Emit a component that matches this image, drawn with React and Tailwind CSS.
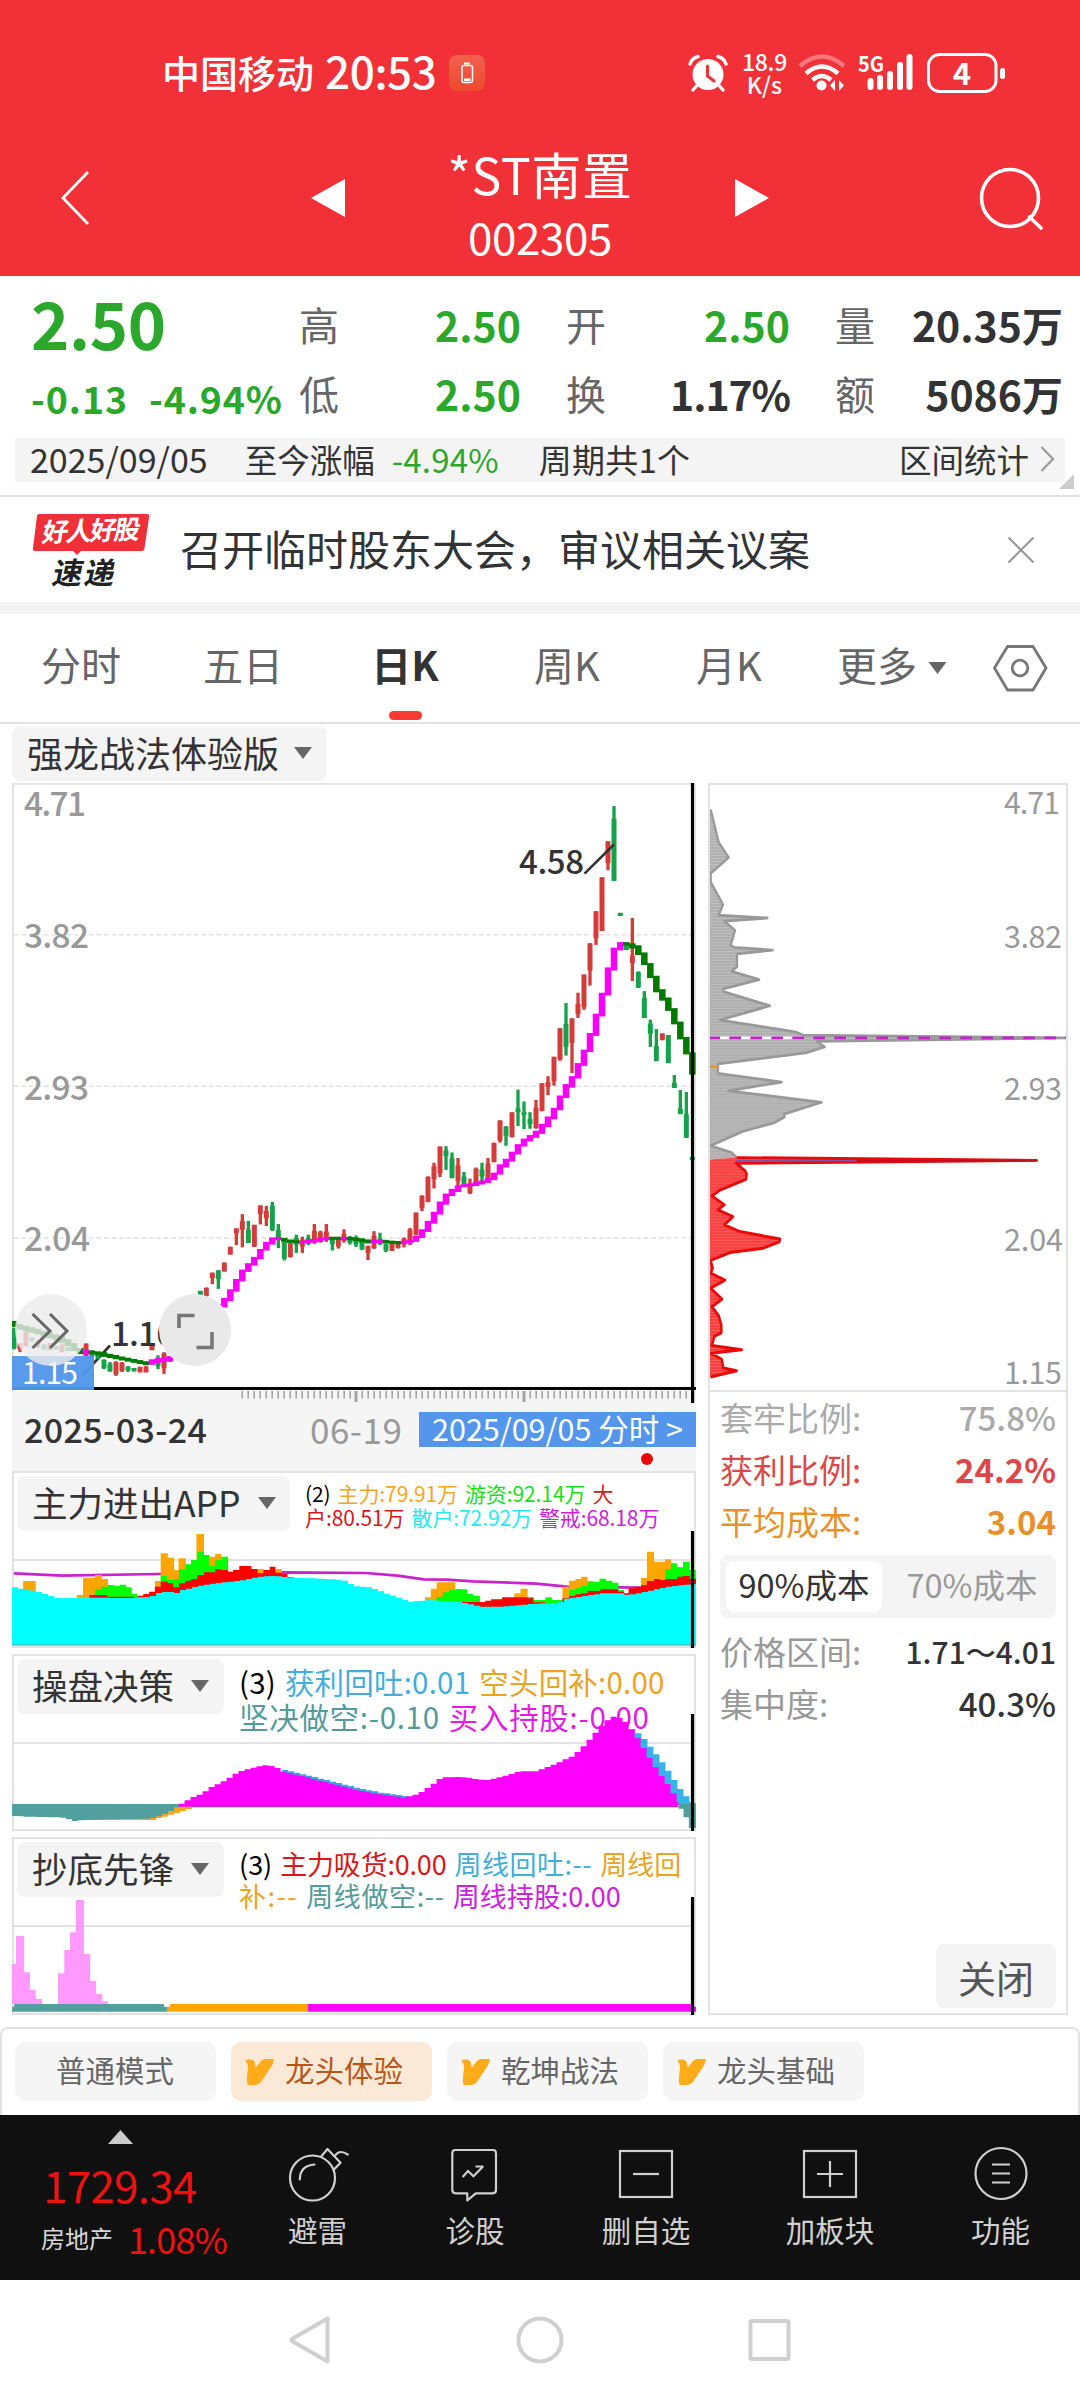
import React from "react";

const FONT = "'Noto Sans CJK SC', 'Noto Sans', sans-serif";
const RED = "#d43c3c";
const GREEN = "#16a24a";

/* Candles: [x, wickTop, wickBottom, bodyTop, bodyBottom, isUp] */
const EARLY_CANDLES = [
  [42, 1385, 1440, 1388, 1438, 0], [60, 1425, 1447, 1425, 1440, 1], [78, 1395, 1432, 1395, 1432, 1],
  [96, 1410, 1420, 1410, 1420, 0], [114, 1416, 1436, 1420, 1428, 1], [132, 1428, 1440, 1428, 1440, 0],
  [150, 1424, 1442, 1424, 1442, 1], [168, 1432, 1440, 1432, 1440, 0], [186, 1428, 1447, 1428, 1447, 1],
  [204, 1434, 1444, 1434, 1444, 0], [258, 1425, 1457, 1425, 1457, 1], [276, 1442, 1462, 1446, 1458, 0],
  [294, 1450, 1465, 1452, 1463, 0], [312, 1465, 1490, 1467, 1488, 0], [330, 1472, 1497, 1476, 1495, 0],
  [348, 1470, 1507, 1472, 1503, 1], [366, 1472, 1497, 1474, 1495, 1], [384, 1482, 1497, 1484, 1493, 0],
  [402, 1487, 1496, 1487, 1495, 0], [420, 1484, 1498, 1484, 1498, 1], [438, 1482, 1498, 1484, 1498, 1],
  [456, 1428, 1442, 1428, 1442, 1], [474, 1455, 1490, 1462, 1482, 0], [492, 1447, 1502, 1450, 1488, 1],
  [510, 1462, 1472, 1462, 1470, 0], [601, 1292, 1312, 1292, 1312, 0], [619, 1283, 1310, 1285, 1305, 1],
  [637, 1246, 1275, 1246, 1260, 1], [655, 1240, 1287, 1240, 1262, 0], [673, 1220, 1243, 1221, 1243, 1],
  [691, 1180, 1200, 1181, 1200, 1], [709, 1134, 1176, 1134, 1147, 1], [727, 1098, 1182, 1115, 1137, 1],
  [745, 1115, 1171, 1137, 1171, 0], [763, 1125, 1181, 1125, 1180, 1], [781, 1076, 1124, 1076, 1098, 1],
  [799, 1077, 1128, 1090, 1108, 1], [817, 1067, 1141, 1077, 1138, 0], [835, 1123, 1184, 1138, 1162, 0],
  [853, 1160, 1215, 1168, 1210, 0], [871, 1170, 1208, 1172, 1206, 1], [889, 1150, 1196, 1158, 1175, 0],
  [907, 1155, 1196, 1162, 1180, 1], [925, 1150, 1176, 1158, 1170, 0], [943, 1123, 1173, 1140, 1168, 1],
  [961, 1140, 1170, 1144, 1168, 1], [979, 1123, 1168, 1142, 1162, 1], [997, 1158, 1190, 1160, 1174, 0],
  [1015, 1158, 1185, 1160, 1180, 1],
];

const LATE_CANDLES = [
  [12, 1136, 1170, 1148, 1165, 1], [30, 1153, 1175, 1155, 1171, 0], [48, 1152, 1181, 1160, 1175, 0],
  [66, 1165, 1189, 1168, 1187, 0], [84, 1178, 1214, 1178, 1196, 1], [102, 1141, 1186, 1152, 1184, 1],
  [120, 1145, 1176, 1160, 1174, 0], [138, 1172, 1194, 1174, 1190, 0], [156, 1170, 1191, 1172, 1191, 1],
  [174, 1166, 1185, 1168, 1183, 1], [192, 1157, 1182, 1160, 1174, 1], [210, 1133, 1176, 1137, 1165, 1],
  [228, 1094, 1152, 1094, 1150, 1], [246, 1050, 1090, 1052, 1083, 1], [264, 1002, 1068, 1004, 1067, 1],
  [282, 968, 1033, 977, 1010, 1], [300, 927, 1004, 927, 995, 1], [318, 926, 986, 937, 951, 0],
  [336, 942, 1007, 957, 1007, 0], [354, 956, 1030, 975, 1015, 1], [372, 991, 1025, 1003, 1023, 0],
  [390, 1008, 1047, 1024, 1045, 1], [408, 980, 1025, 983, 1020, 1], [426, 968, 1015, 985, 1003, 0],
  [444, 956, 1012, 970, 1008, 1], [462, 917, 967, 918, 966, 1], [480, 861, 917, 861, 912, 1],
  [498, 876, 925, 876, 900, 0], [516, 840, 904, 841, 903, 1], [534, 783, 875, 831, 840, 0],
  [552, 813, 883, 840, 847, 0], [570, 840, 882, 857, 870, 0], [588, 809, 882, 829, 880, 1],
  [606, 767, 838, 767, 837, 1], [624, 749, 797, 764, 776, 1], [642, 700, 773, 700, 762, 1],
  [660, 628, 710, 628, 707, 1], [678, 564, 697, 617, 675, 0], [696, 603, 741, 603, 665, 1],
  [714, 538, 602, 566, 592, 1], [732, 492, 581, 492, 575, 1], [750, 413, 520, 413, 482, 1],
  [768, 332, 417, 332, 400, 1], [786, 246, 382, 246, 382, 1], [804, 155, 228, 155, 210, 1],
  [822, 66, 255, 98, 255, 0], [841, 336, 343, 336, 344, 0], [859, 412, 430, 412, 430, 0],
  [877, 349, 508, 444, 463, 1], [895, 484, 526, 486, 525, 0], [913, 534, 602, 551, 602, 0],
  [931, 606, 675, 616, 642, 0], [949, 630, 711, 673, 711, 0], [967, 641, 658, 641, 658, 1],
  [985, 645, 716, 645, 716, 0], [1003, 746, 779, 766, 779, 0], [1021, 784, 845, 831, 845, 0],
  [1039, 789, 905, 845, 905, 0], [1057, 953, 961, 953, 961, 0],
];

/* Trend ribbon: [x, top, bottom, isRising] */
const EARLY_TREND = [
  [42, 1368, 1383, 0], [60, 1376, 1390, 0], [78, 1380, 1394, 0], [96, 1384, 1398, 0], [114, 1388, 1402, 0],
  [132, 1393, 1408, 0], [150, 1397, 1412, 0], [168, 1402, 1417, 0], [186, 1407, 1424, 0], [204, 1414, 1432, 0],
  [222, 1424, 1444, 0], [240, 1436, 1452, 0], [258, 1441, 1453, 1], [276, 1443, 1452, 0], [294, 1445, 1455, 0],
  [312, 1447, 1459, 0], [330, 1451, 1462, 0], [348, 1454, 1465, 0], [366, 1458, 1468, 0], [384, 1461, 1471, 0],
  [402, 1464, 1474, 0], [420, 1467, 1477, 0], [438, 1470, 1480, 0], [456, 1465, 1479, 1], [474, 1462, 1474, 1],
  [492, 1461, 1471, 1], [510, 1457, 1470, 1], [655, 1325, 1345, 1], [673, 1310, 1334, 1], [691, 1288, 1318, 1],
  [709, 1262, 1294, 1], [727, 1238, 1268, 1], [745, 1222, 1244, 1], [763, 1206, 1228, 1], [781, 1186, 1212, 1],
  [799, 1168, 1190, 1], [817, 1157, 1175, 1], [835, 1156, 1164, 1], [853, 1158, 1168, 0], [871, 1162, 1171, 0],
  [889, 1164, 1172, 0], [907, 1165, 1172, 1], [925, 1163, 1172, 1], [943, 1161, 1170, 1], [961, 1158, 1167, 1],
  [979, 1156, 1164, 1], [997, 1155, 1163, 0], [1015, 1155, 1163, 0],
];

const LATE_TREND = [
  [12, 1156, 1164, 1], [30, 1156, 1164, 0], [48, 1157, 1166, 0], [66, 1159, 1169, 0], [84, 1162, 1172, 0],
  [102, 1163, 1171, 1], [120, 1163, 1171, 1], [138, 1163, 1172, 0], [156, 1165, 1173, 0], [174, 1166, 1174, 0],
  [192, 1165, 1174, 1], [210, 1163, 1172, 1], [228, 1153, 1168, 1], [246, 1136, 1158, 1], [264, 1115, 1143, 1],
  [282, 1092, 1122, 1], [300, 1066, 1099, 1], [318, 1046, 1074, 1], [336, 1034, 1052, 1], [354, 1025, 1042, 1],
  [372, 1022, 1030, 1], [390, 1020, 1028, 1], [408, 1017, 1027, 1], [426, 1013, 1023, 1], [444, 1006, 1019, 1],
  [462, 993, 1012, 1], [480, 972, 998, 1], [498, 958, 980, 1], [516, 940, 965, 1], [534, 921, 947, 1],
  [552, 907, 927, 1], [570, 898, 914, 1], [588, 887, 905, 1], [606, 870, 895, 1], [624, 851, 878, 1],
  [642, 829, 858, 1], [660, 798, 835, 1], [678, 769, 804, 1], [696, 749, 778, 1], [714, 716, 755, 1],
  [732, 682, 723, 1], [750, 640, 688, 1], [768, 591, 647, 1], [786, 538, 598, 1], [804, 474, 545, 1],
  [822, 424, 482, 1], [841, 410, 431, 1], [859, 410, 419, 0], [877, 413, 426, 0], [895, 418, 443, 0],
  [913, 436, 468, 0], [931, 463, 501, 0], [949, 495, 537, 0], [967, 529, 558, 0], [985, 550, 584, 0],
  [1003, 577, 618, 0], [1021, 611, 656, 0], [1039, 650, 694, 0], [1057, 689, 745, 0],
];

function Series({ x, candles, trend }) {
  return (
    <g transform={`translate(${x} 780) scale(0.33333 0.39541)`}>
      {candles.map(([cx, wt, wb, bt, bb, up]) => (
        <g key={cx} fill={up ? RED : GREEN}>
          <rect x={cx - 5} y={wt} width="10" height={wb - wt} />
          <rect x={cx - 7.5} y={bt} width="15" height={bb - bt} />
        </g>
      ))}
      {trend.map(([cx, t, b, up]) => (
        <rect key={cx} x={cx - 9.8} y={t} width="19.6" height={b - t} fill={up ? "#f800f8" : "#007a00"} />
      ))}
    </g>
  );
}

function KLineChart() {
  return (
    <svg className="block h-[608px] w-[684px]" viewBox="12 783 684 608" fontFamily={FONT}>
      <path d="M12 784H696M13 783V1391" stroke="#e4e4e4" strokeWidth="2" fill="none" />
      <path d="M695.2 783V1391" stroke="#e4e4e4" strokeWidth="1.6" />
      {[934.7, 1086.2, 1238].map((y) => (
        <path key={y} d={`M14 ${y}H691`} stroke="#e0e0e0" strokeWidth="1.6" strokeDasharray="4.5 3" />
      ))}
      <g fontSize="33.5" fontWeight="500" fill="#999">
        <text x="24" y="816" textLength="62">4.71</text>
        <text x="24" y="948" textLength="65">3.82</text>
        <text x="24" y="1100" textLength="65">2.93</text>
        <text x="24" y="1251" textLength="66">2.04</text>
      </g>
      <path d="M82 1376L110 1345.5" stroke="#333" strokeWidth="2.6" />
      <Series x={0} candles={EARLY_CANDLES} trend={EARLY_TREND} />
      <Series x={340} candles={LATE_CANDLES} trend={LATE_TREND} />
      <path d="M584.5 873.7L614 844.5" stroke="#333" strokeWidth="2.6" />
      <g fontSize="33" fontWeight="500" fill="#333">
        <text x="519" y="874" textLength="65">4.58</text>
        <text x="111" y="1346" fontSize="33" textLength="64">1.16</text>
      </g>
      <path d="M12 1388.5H696" stroke="#000" strokeWidth="3" />
      <path d="M692.5 783V1391" stroke="#000" strokeWidth="3.2" />
      <rect x="12" y="1356" width="82" height="34" fill="#5396ec" fillOpacity="0.96" />
      <text x="22" y="1384" fontSize="30" fill="#fff" textLength="56">1.15</text>
    </svg>
  );
}

const UPPER_CHIPS =
  "62,75 86,158 116,196 62,236 62,258 99,315 86,342 232,349 103,357 135,380 122,418 132,423 248,430 141,440 141,472 125,484 207,505 100,528 100,535 240,571 90,607 315,637 340,645 1128,652 380,661 404,675 347,690 84,718 84,742 275,764 115,786 395,815 282,845 284,852 250,868 160,888 62,925 125,942 140,955";
const LOWER_CHIPS =
  "140,955 1040,962 138,969 165,988 170,996 168,1010 90,1037 66,1052 103,1074 84,1087 129,1104 103,1125 150,1142 270,1161 268,1168 220,1184 120,1195 62,1215 68,1235 62,1247 105,1265 62,1285 96,1313 66,1332 86,1355 94,1378 94,1398 73,1407 66,1430 155,1441 64,1450 95,1465 100,1487 140,1494 62,1510";

function ChipChart() {
  return (
    <svg className="block h-[609px] w-[360px]" viewBox="708 783 360 609" fontFamily={FONT}>
      <defs>
        <pattern id="lines" width="8" height="7.6" patternUnits="userSpaceOnUse">
          <rect width="8" height="1.8" fill="#fff" fillOpacity="0.22" />
        </pattern>
      </defs>
      <g transform="translate(690 780) scale(0.33333 0.39541)" strokeLinejoin="round">
        <polygon points={`60,75 ${UPPER_CHIPS} 60,960`} fill="#b0b0b0" />
        <polygon points={`60,960 ${LOWER_CHIPS} 60,1515`} fill="#f84040" />
        <polygon points={`60,75 ${UPPER_CHIPS} 60,960`} fill="url(#lines)" />
        <polygon points={`60,960 ${LOWER_CHIPS} 60,1515`} fill="url(#lines)" />
        <polyline points={UPPER_CHIPS} fill="none" stroke="#999" strokeWidth="7" />
        <polyline points={LOWER_CHIPS} fill="none" stroke="#ea0808" strokeWidth="7.5" />
        <path d="M138 963H500" stroke="#7a55a8" strokeWidth="4" />
        <path d="M500 963H1040" stroke="#c01020" strokeWidth="4" />
        <path d="M60 652H340" stroke="#fff" strokeWidth="7" />
        <path d="M55 652H1128" stroke="#c81fd2" strokeWidth="7" strokeDasharray="35 28" />
        <path d="M60 725H84" stroke="#e8912a" strokeWidth="6" />
      </g>
      <path d="M708 784H1068M709 783V1392M1067 783V1392M708 1391H1068" stroke="#e2e2e2" strokeWidth="2" fill="none" />
      <g fontSize="30.5" fill="#999">
        <text x="1004" y="813.5" textLength="56">4.71</text>
        <text x="1004" y="947.5" textLength="58">3.82</text>
        <text x="1004" y="1099.5" textLength="58">2.93</text>
        <text x="1004" y="1250.5" textLength="59">2.04</text>
        <text x="1004" y="1384" textLength="58">1.15</text>
      </g>
    </svg>
  );
}

const MAIN_CYAN = [
  [27, 620], [52, 628], [80, 633], [95, 640], [120, 650], [135, 655], [185, 653], [300, 654], [340, 650], [360, 637],
  [380, 635], [395, 640], [410, 630], [440, 620], [470, 612], [500, 608], [540, 602], [580, 590], [620, 588],
  [655, 593], [720, 596], [770, 600], [795, 618], [830, 622], [870, 642], [920, 665], [960, 660], [1035, 667],
  [1080, 680], [1130, 680], [1190, 672], [1255, 668], [1265, 657], [1300, 650], [1350, 640], [1390, 640],
  [1410, 645], [1450, 635], [1500, 620], [1550, 612], [1575, 610],
];
const MAIN_ORANGE = [
  [52, 80, 603], [172, 186, 645], [186, 213, 594], [213, 228, 585], [228, 242, 597], [347, 360, 603], [360, 376, 520],
  [376, 390, 533], [390, 400, 570], [400, 416, 535], [440, 457, 462], [457, 470, 525], [470, 482, 530], [482, 496, 522],
  [575, 590, 567], [617, 631, 567], [952, 965, 652], [965, 978, 626], [978, 1020, 607], [1152, 1166, 640],
  [1166, 1182, 626], [1182, 1195, 652], [1260, 1275, 620], [1275, 1289, 602], [1289, 1302, 597], [1302, 1316, 590],
  [1316, 1330, 603], [1436, 1449, 594], [1449, 1465, 515], [1465, 1490, 545], [1490, 1503, 538],
];
const MAIN_GREEN = [
  [213, 228, 628], [228, 242, 620], [242, 255, 615], [255, 268, 618], [268, 282, 614], [282, 295, 622], [295, 308, 642],
  [360, 374, 588], [374, 388, 600], [388, 401, 597], [401, 415, 568], [415, 428, 553], [428, 442, 540], [442, 457, 515],
  [457, 468, 525], [468, 482, 557], [482, 496, 540], [496, 511, 530], [978, 992, 650], [992, 1006, 637],
  [1006, 1020, 630], [1020, 1034, 627], [1034, 1047, 628], [1047, 1060, 642], [1060, 1075, 647], [1182, 1195, 652],
  [1195, 1222, 660], [1222, 1236, 652], [1236, 1260, 660], [1275, 1289, 630], [1289, 1302, 625], [1302, 1316, 618],
  [1316, 1330, 607], [1330, 1343, 605], [1343, 1357, 596], [1357, 1371, 602], [1371, 1385, 608], [1385, 1398, 630],
  [1490, 1503, 568], [1503, 1517, 550], [1517, 1530, 562], [1530, 1545, 545], [1545, 1559, 570],
];
const MAIN_RED = [
  [200, 240, 645], [240, 300, 650], [308, 321, 647], [321, 334, 642], [334, 347, 635], [347, 360, 620], [360, 376, 605],
  [376, 388, 610], [388, 401, 622], [401, 415, 610], [415, 428, 602], [428, 442, 597], [442, 457, 585], [457, 482, 577],
  [482, 496, 568], [496, 511, 570], [511, 522, 575], [522, 536, 570], [536, 563, 558], [563, 577, 567], [577, 590, 580],
  [590, 604, 570], [604, 617, 560], [617, 631, 578], [631, 644, 582], [644, 658, 592], [1034, 1087, 666],
  [1087, 1100, 662], [1100, 1125, 658], [1125, 1182, 652], [1182, 1195, 655], [1195, 1222, 667], [1260, 1275, 655],
  [1275, 1289, 648], [1289, 1302, 643], [1302, 1316, 640], [1316, 1345, 633], [1345, 1385, 628], [1385, 1398, 635],
  [1398, 1408, 640], [1408, 1422, 625], [1422, 1436, 620], [1436, 1449, 615], [1449, 1465, 603], [1465, 1478, 597],
  [1478, 1490, 600], [1490, 1517, 597], [1517, 1530, 590], [1530, 1545, 588], [1545, 1559, 597],
];

const STEP = 13.44;

/* Staircase outline through the key points, closed on the base line. */
function stairs(points, base) {
  const start = points[0][0];
  const end = points[points.length - 1][0];
  let d = `M${start} ${base}`;
  for (let x = start; x < end; x += STEP) {
    const mid = Math.min(x + STEP / 2, end);
    const k = Math.max(1, points.findIndex((p) => p[0] >= mid));
    const [x0, y0] = points[k - 1];
    const [x1, y1] = points[k];
    const y = Math.round(y0 + ((y1 - y0) * (mid - x0)) / (x1 - x0));
    d += `V${y}H${Math.min(x + STEP, end)}`;
  }
  return `${d}V${base}Z`;
}

function bars(list, base) {
  return list.map(([a, b, y]) => `M${a} ${base}V${y}H${b}V${base}Z`).join("");
}

function MainForceChart() {
  return (
    <svg className="block h-[117px] w-[684px]" viewBox="12 1531 684 117">
      <path d="M12 1560H691" stroke="#e2e2e2" strokeWidth="2" />
      <path d="M13 1531V1648M695 1531V1648" stroke="#e2e2e2" strokeWidth="2" />
      <g transform="translate(0 1380) scale(0.44643 0.33333)">
        <path d="M31 580L140 587L355 582L640 577L820 579L890 587L950 598L1000 599L1060 604L1200 611L1270 620L1385 622L1435 623" fill="none" stroke="#cc22cc" strokeWidth="8" />
        <path d={bars(MAIN_ORANGE, 795)} fill="#ffa500" />
        <path d={bars(MAIN_GREEN, 795)} fill="#00ff00" />
        <path d={bars(MAIN_RED, 795)} fill="#ff0000" />
        <path d={stairs(MAIN_CYAN, 795)} fill="#00ffff" />
        <path d="M27 795H1559" stroke="#3fa8a8" strokeWidth="2.5" />
      </g>
      <path d="M12 1647H696" stroke="#dfe4e4" strokeWidth="2" />
      <path d="M692.5 1531V1648" stroke="#000" strokeWidth="3.2" />
    </svg>
  );
}

const TREND_MAGENTA = [
  [400, 496], [415, 485], [430, 473], [455, 460], [470, 443], [500, 425], [535, 395], [575, 380], [600, 375], [620, 382],
  [632, 394], [700, 416], [800, 451], [850, 463], [905, 473], [935, 463], [955, 447], [990, 412], [1035, 411],
  [1090, 421], [1130, 408], [1165, 394], [1200, 394], [1245, 372], [1280, 350], [1300, 330], [1330, 285], [1355, 245],
  [1375, 230], [1395, 237], [1412, 262], [1440, 320], [1460, 365], [1480, 405], [1500, 440], [1520, 485],
];
const TREND_BLUE_A = [[632, 388], [700, 409], [800, 443], [850, 457], [925, 471]];
const TREND_BLUE_B = [[1410, 262], [1437, 286], [1460, 325], [1480, 360], [1500, 397], [1520, 440], [1547, 485]];
const TREND_TEAL = [[27, 527], [60, 530], [145, 533], [165, 543], [190, 540], [250, 538], [335, 536], [360, 528], [380, 515], [405, 496]];

function DecisionChart() {
  return (
    <svg className="block h-[117px] w-[684px] overflow-visible" viewBox="12 1714 684 117">
      <path d="M12 1743H691" stroke="#e2e2e2" strokeWidth="2" />
      <path d="M13 1714V1831M695 1714V1831M12 1830H696" stroke="#e2e2e2" strokeWidth="2" />
      <g transform="translate(0 1640) scale(0.44643 0.33333)">
        <path d="M200 492V540H350V534H363V530H376V524H390V520H403V514H416V507H430V492Z" fill="#f5a623" />
        <path d={stairs(TREND_TEAL, 492)} fill="#529f9f" />
        <path d={stairs(TREND_BLUE_A, 492)} fill="#3ba7e0" />
        <path d={stairs(TREND_BLUE_B, 492)} fill="#36b4e8" />
        <path d={stairs(TREND_MAGENTA, 500)} fill="#ff00ff" />
        <path d="M430 500H1518" stroke="#b020b0" strokeWidth="3" />
        <path d="M1520 492V506H1531V532H1543V564H1559V488H1545V492Z" fill="#529f9f" />
      </g>
      <path d="M692.5 1714V1831" stroke="#000" strokeWidth="3.2" />
    </svg>
  );
}

const PINK = [
  [27, 36, 402], [36, 54, 318], [54, 67, 427], [67, 80, 480], [80, 94, 507], [130, 144, 430], [144, 157, 360],
  [157, 170, 307], [170, 188, 210], [188, 202, 372], [202, 215, 453], [215, 229, 492], [229, 242, 514],
];

function VanguardChart() {
  return (
    <svg className="block h-[118px] w-[684px]" viewBox="12 1897 684 118">
      <path d="M12 1926H691" stroke="#e2e2e2" strokeWidth="2" />
      <path d="M13 1897V2015M695 1897V2015M12 2014H696" stroke="#e2e2e2" strokeWidth="2" />
      <g transform="translate(0 1830) scale(0.44643 0.33333)">
        <path d={bars(PINK, 522)} fill="#ff99ff" />
        <path d="M27 545V530H32V522H367V530H374V545Z" fill="#529f9f" />
        <path d="M374 545V530H381V522H690V545Z" fill="#ffa500" />
        <path d="M690 545V522H1548V530H1559V545Z" fill="#ff00ff" />
      </g>
      <path d="M692.5 1897V2015" stroke="#000" strokeWidth="3.2" />
    </svg>
  );
}

function TimeTicks() {
  const ticks = Array.from({ length: 75 }, (_, i) => 242 + i * 6);
  return (
    <svg className="block h-[12px] w-[684px]" viewBox="12 1391 684 12">
      {ticks.map((x) => (
        <rect key={x} x={x - 0.6} y="1390" width="1.6" height="8.5" fill="#a5a5a5" />
      ))}
      <rect x="354.5" y="1390" width="3" height="12" fill="#a5a5a5" />
      <rect x="522.5" y="1390" width="3" height="12" fill="#a5a5a5" />
      <rect x="691" y="1390" width="3.2" height="13" fill="#000" />
    </svg>
  );
}

const Down = ({ className }) => (
  <svg className={className} viewBox="0 0 18 12">
    <path d="M0 0H18L9 12Z" fill="#666" />
  </svg>
);

function StatusBar() {
  return (
    <div className="flex h-[146px] items-center pl-[162px] text-white">
      <div className="-mt-[2px] flex h-[40px] items-center">
        <span className="text-[38px] leading-[40px] font-medium">中国移动</span>
        <span className="-mt-[4px] ml-[11px] text-[44px] leading-[40px] font-medium tracking-[-0.4px]">20:53</span>
      </div>
      <svg className="ml-[13px] h-9 w-9" viewBox="0 0 36 36">
        <defs>
          <linearGradient id="bat" x1="0" y1="0" x2="0" y2="1">
            <stop offset="0" stopColor="#f2604f" />
            <stop offset="1" stopColor="#ec4a2c" />
          </linearGradient>
        </defs>
        <rect width="36" height="36" rx="8" fill="url(#bat)" />
        <path d="M15 8.500H21" stroke="#fff" strokeWidth="2" />
        <rect x="13" y="10.500" width="10.500" height="17" rx="2" fill="none" stroke="#fff" strokeWidth="1.500" />
        <rect x="15" y="23.500" width="6.500" height="2.500" fill="#fff" />
      </svg>
      <svg className="ml-[203px] h-[38px] w-[40px]" viewBox="0 0 40 38" fill="none" stroke="#fff">
        <circle cx="20" cy="20.500" r="15.500" fill="#fff" stroke="none" />
        <path d="M2 10Q4 4 10 2.500M38 10Q36 4 30 2.500M8.500 32L5 36M31.500 32L35 36" strokeWidth="3.400" strokeLinecap="round" />
        <path d="M19.500 12V22L26 27" stroke="#f13037" strokeWidth="3" strokeLinecap="round" />
      </svg>
      <div className="ml-[12px] flex w-[48px] flex-col items-center text-[23px] leading-[23px] font-medium">
        <span className="tracking-[-0.3px]">18.9</span>
        <span>K/s</span>
      </div>
      <svg className="ml-[10px] h-[38px] w-[48px]" viewBox="0 0 48 38" fill="none" stroke="#fff" strokeWidth="4.500">
        <path d="M2 12Q24 -7 46 12" strokeOpacity="0.35" />
        <path d="M8 19.500Q24 5.500 40 19.500" />
        <path d="M14.500 26Q24 18 33 26" />
        <circle cx="23.500" cy="31.500" r="5" fill="#fff" stroke="none" />
        <path d="M37 26V37L32 31.500ZM41 26V37L46 31.500Z" fill="#fff" stroke="none" />
      </svg>
      <svg className="ml-[13px] h-[42px] w-[56px] overflow-visible" viewBox="860 53 56 42" fontFamily={FONT}>
        <text x="859" y="73" fontSize="21.500" fontWeight="700" fill="#fff" textLength="26" lengthAdjust="spacingAndGlyphs">5G</text>
        {[[868.5, 79], [878, 76], [888, 72], [898, 63], [907.5, 55]].map(([x, y]) => (
          <rect key={x} x={x} y={y} width="6" height={91 - y} rx="3" fill="#fff" />
        ))}
      </svg>
      <svg className="ml-[11px] h-[42px] w-[80px] overflow-visible" viewBox="927 52 80 42" fontFamily={FONT}>
        <rect x="929.500" y="54.500" width="67.500" height="37" rx="11" fill="none" stroke="#fff" strokeWidth="3" />
        <rect x="1001" y="68" width="5" height="11" rx="2.500" fill="#fff" />
        <text x="963" y="84.500" fontSize="31" fontWeight="700" fill="#fff" textAnchor="middle">4</text>
      </svg>
    </div>
  );
}

function TitleBar() {
  return (
    <div className="flex h-[130px] items-center text-white">
      <svg className="-mt-[26px] ml-[60px] h-[56px] w-[30px]" viewBox="0 0 30 56">
        <path d="M28 2L3 28L28 54" fill="none" stroke="#fff" strokeWidth="2.800" />
      </svg>
      <svg className="-mt-[27px] ml-[221px] h-[40px] w-[34px]" viewBox="0 0 34 40">
        <path d="M0 20L34 1V39Z" fill="#fff" />
      </svg>
      <div className="-mt-[13px] flex w-[390px] flex-col items-center">
        <span className="text-[50px] leading-[60px] tracking-[0.6px]">*ST南置</span>
        <span className="mt-[2px] text-[44px] leading-[62px] tracking-[-0.4px]">002305</span>
      </div>
      <svg className="-mt-[27px] h-[40px] w-[34px]" viewBox="0 0 34 40">
        <path d="M34 20L0 1V39Z" fill="#fff" />
      </svg>
      <svg className="-mt-[27px] ml-[209px] h-[66px] w-[68px]" viewBox="978 164 68 66">
        <circle cx="1010" cy="197" r="28.500" fill="none" stroke="#fff" strokeWidth="3.600" />
        <path d="M1029.500 216L1041 227" stroke="#fff" strokeWidth="3.600" strokeLinecap="round" />
      </svg>
    </div>
  );
}

const STATS = [
  { cls: "w-[222px]", rows: [["高", "2.50", "text-[#2ba72b]"], ["低", "2.50", "text-[#2ba72b]"]] },
  { cls: "ml-[45px] w-[224px]", rows: [["开", "2.50", "text-[#2ba72b]"], ["换", "1.17%", "tracking-[-1.1px] text-[#333]"]] },
  { cls: "ml-[45px] w-[228px]", rows: [["量", "20.35万", "text-[#333]"], ["额", "5086万", "text-[#333]"]] },
];

function Quote() {
  return (
    <section className="h-[221px] border-b-2 border-[#e2e2e2] pt-[13px]">
      <div className="flex h-[138px]">
        <div className="w-[299px] pl-[31px] font-bold text-[#2ba72b]">
          <div className="-mt-[1px] text-[65px] leading-[68px] tracking-[-0.4px]">2.50</div>
          <div className="flex gap-[21px] pt-[9px] text-[37.500px] leading-[66px] tracking-[0.9px] whitespace-nowrap">
            <span>-0.13</span>
            <span>-4.94%</span>
          </div>
        </div>
        {STATS.map((col) => (
          <div key={col.rows[0][0]} className={col.cls}>
            {col.rows.map(([label, value, color]) => (
              <div key={label} className="flex h-[69px] items-center justify-between">
                <span className="text-[40px] leading-[60px] text-[#666]">{label}</span>
                <span className={`text-[41px] leading-[60px] font-bold whitespace-nowrap ${color}`}>{value}</span>
              </div>
            ))}
          </div>
        ))}
      </div>
      <div className="mt-[11px] ml-[15px] flex h-[44px] w-[1050px] items-center bg-[#f4f4f4] pr-[10px] pb-[2px] pl-[15px] text-[32.500px] leading-[40px] text-[#333]">
        <span className="text-[34px]">2025/09/05</span>
        <span className="ml-[37px]">至今涨幅</span>
        <span className="ml-[17px] text-[33px] tracking-[0.2px] text-[#2ba72b]">-4.94%</span>
        <span className="ml-[40px] text-[33px] tracking-[0.2px]">周期共1个</span>
        <span className="ml-auto">区间统计</span>
        <svg className="ml-[11px] h-[26px] w-[15px]" viewBox="0 0 15 26">
          <path d="M1.500 1L13 13L1.500 25" fill="none" stroke="#999" strokeWidth="2.200" />
        </svg>
      </div>
      <svg className="-mt-[8px] ml-[1059px] block h-[15px] w-[15px]" viewBox="0 0 15 15">
        <path d="M15 0V15H0Z" fill="#ccc" />
      </svg>
    </section>
  );
}

function News() {
  return (
    <section className="flex h-[105px] items-center pl-[32px]">
      <svg className="h-[76px] w-[118px] overflow-visible" viewBox="32 512 118 76" fontFamily={FONT}>
        <path d="M39 514H147Q149.500 514 149.300 516L144.500 548Q144 551 142 551H81L77 555L73 551H35Q32.500 551 33 548L37 516Q37.300 514 39 514Z" fill="#f03038" />
        <text transform="translate(41 542) rotate(-2) skewX(-12)" fontSize="26" fontWeight="700" fill="#fff" textLength="98">好人好股</text>
        <text transform="translate(51 583.500) skewX(-12)" fontSize="30" fontWeight="700" fill="#222" textLength="62">速递</text>
      </svg>
      <span className="-mt-[4px] ml-[30px] text-[42px] leading-[56px] whitespace-nowrap text-[#333]">召开临时股东大会，审议相关议案</span>
      <svg className="ml-[197px] h-[28px] w-[28px]" viewBox="0 0 28 28">
        <path d="M1.500 1.500L26.500 26.500M26.500 1.500L1.500 26.500" stroke="#999" strokeWidth="2.200" />
      </svg>
    </section>
  );
}

function PeriodTabs() {
  const tabs = ["分时", "五日", "日K", "周K", "月K"];
  return (
    <nav className="flex h-[110px] border-b-2 border-[#e2e2e2] text-[40px] leading-[101px] text-[#666]">
      {tabs.map((t) => (
        <div key={t} className="relative w-[162px] text-center">
          <span className={t === "日K" ? "font-bold text-[#333]" : ""}>{t}</span>
          {t === "日K" && <i className="absolute bottom-[2px] left-[65px] h-[9px] w-[33px] rounded-full bg-[#fb3a33]" />}
        </div>
      ))}
      <div className="flex w-[165px] items-center justify-center gap-[11px] pr-[1px]">
        <span className="-mt-[7px]">更多</span>
        <Down className="h-[12px] w-[19px]" />
      </div>
      <svg className="mt-[28px] ml-[16px] h-[52px] w-[58px]" viewBox="991 642 58 52" fill="none" stroke="#777" strokeWidth="2.800">
        <path d="M994.500 668L1007.500 646.500H1033L1046 668L1033 690H1007.500Z" strokeLinejoin="round" />
        <circle cx="1020" cy="668" r="7.800" />
      </svg>
    </nav>
  );
}

function IndicatorHead({ name, wide, children, legendClass }) {
  return (
    <div className="flex h-[60px] border-x-2 border-t-2 border-[#e2e2e2] pt-[3px] pl-[3px]">
      <button className={`flex h-[55px] shrink-0 items-center rounded-[8px] bg-[#f4f4f4] pb-[3px] pl-[15px] text-left text-[35.500px] leading-[50px] whitespace-nowrap text-[#333] ${wide ? "w-[273px]" : "w-[207px]"}`}>
        {name}
        <Down className="mt-[2px] ml-[17px] h-[12px] w-[18px]" />
      </button>
      <div className={legendClass}>{children}</div>
    </div>
  );
}

function ChipInfo() {
  return (
    <aside className="flex h-[623px] flex-col border-x-2 border-b-2 border-[#e2e2e2] pr-[10px] pl-[10px] text-[33px] leading-[52px] text-[#999]">
      <div className="-mt-[1px] flex justify-between text-[#aaa]"><span>套牢比例:</span><b className="font-medium">75.8%</b></div>
      <div className="flex justify-between text-[#dc4747]"><span>获利比例:</span><b className="font-bold">24.2%</b></div>
      <div className="flex justify-between text-[#e8912a]"><span>平均成本:</span><b className="font-bold">3.04</b></div>
      <div className="mt-[8px] flex h-[63px] rounded-[8px] bg-[#f4f4f4] p-[6px] leading-[46px]">
        <span className="w-[156px] rounded-[8px] bg-white text-center text-[32.500px] text-[#333]">90%成本</span>
        <span className="grow pl-[12px] text-center text-[32.500px]">70%成本</span>
      </div>
      <div className="mt-[7px] flex justify-between"><span>价格区间:</span><b className="text-[30px] font-medium text-[#333]">1.71～4.01</b></div>
      <div className="flex justify-between"><span>集中度:</span><b className="font-medium text-[#333]">40.3%</b></div>
      <button className="mt-auto mb-[5px] h-[64px] w-[120px] self-end rounded-[8px] bg-[#f4f4f4] text-[38px] leading-[57px] text-[#555]">关闭</button>
    </aside>
  );
}

const VMark = () => (
  <svg className="mr-[11px] ml-[14px] h-[26px] w-[29px] shrink-0" viewBox="0 0 29 26">
    <path d="M0 1.500Q3 0 6 0.500Q9.500 1 10 4L10.800 8.500L16 2Q17.500 0 20.500 0H29Q28.500 4 26 8L17 21.500Q14 26 9 26H3Q1.500 24.500 2 19L3 8Q3 4 0 1.500Z" fill="#ffab1a" />
  </svg>
);

function Strategies() {
  return (
    <div className="flex h-[88px] gap-[15px] rounded-t-[8px] border-x-2 border-t-2 border-[#e2e2e2] pt-[13px] pl-[13px] text-[29.500px] leading-[54px] text-[#666]">
      <button className="flex h-[59px] w-[201px] items-center rounded-[10px] bg-[#f5f5f5] pl-[41px]"><span className="-mt-[5px]">普通模式</span></button>
      <button className="flex h-[59px] w-[201px] items-center rounded-[10px] bg-[#fbe9d8] text-[#b8561a]"><VMark /><span className="-mt-[5px]">龙头体验</span></button>
      <button className="flex h-[59px] w-[201px] items-center rounded-[10px] bg-[#f5f5f5]"><VMark /><span className="-mt-[5px]">乾坤战法</span></button>
      <button className="flex h-[59px] w-[201px] items-center rounded-[10px] bg-[#f5f5f5]"><VMark /><span className="-mt-[5px]">龙头基础</span></button>
    </div>
  );
}

function Action({ label, width, children }) {
  return (
    <div className={`flex flex-col items-center pt-[30px] ${width}`}>
      <svg className="h-[60px] w-[64px]" viewBox="0 0 64 60" fill="none" stroke="#d0d0d0" strokeWidth="2.200">
        {children}
      </svg>
      <span className="mt-[4px] text-[29.500px] leading-[40px] whitespace-nowrap text-[#d0d0d0]">{label}</span>
    </div>
  );
}

function BottomBar() {
  return (
    <div className="flex h-[165px] bg-[#101010]">
      <div className="flex w-[240px] flex-col items-center pt-[15px]">
        <svg className="h-[14px] w-[25px]" viewBox="0 0 25 14"><path d="M12.500 0L25 14H0Z" fill="#ccc" /></svg>
        <span className="mt-[16px] text-[43.500px] leading-[50px] tracking-[-0.5px] text-[#f01010]">1729.34</span>
        <div className="mt-[8px] ml-[28px] flex items-center">
          <span className="text-[24px] leading-[40px] text-[#d8d8d8]">房地产</span>
          <span className="-mt-[1px] ml-[15px] text-[36px] leading-[40px] tracking-[-0.8px] text-[#f01010]">1.08%</span>
        </div>
      </div>
      <Action label="避雷" width="w-[155px]">
        <circle cx="26.500" cy="33" r="22.500" />
        <path d="M13.800 34.500Q14 20.500 28.500 19.500" strokeLinecap="round" />
        <path d="M34.500 12.300L41.500 4L54.500 17.700L46.800 25.700" strokeLinejoin="round" />
        <path d="M48.800 11Q51.500 7 55 7Q58 7 61.800 9.500" strokeLinecap="round" />
      </Action>
      <Action label="诊股" width="w-[160px]">
        <path d="M12.500 5H49.800Q53 5 53 8.200V45.100Q53 48.300 49.800 48.300H32.700L24.300 55.500V48.300H12.500Q9.300 48.300 9.300 45.100V8.200Q9.300 5 12.500 5Z" strokeLinejoin="round" />
        <path d="M19.700 32L25 26L30.500 31.300L40 21.500M32.500 21.500H40.500" />
      </Action>
      <Action label="删自选" width="w-[182px]">
        <rect x="6" y="6" width="52" height="46" />
        <path d="M19 29H45" />
      </Action>
      <Action label="加板块" width="w-[186px]">
        <rect x="6" y="6" width="52" height="46" />
        <path d="M19 29H45M32 16V42" />
      </Action>
      <Action label="功能" width="w-[155px]">
        <circle cx="32" cy="28.500" r="25.500" />
        <path d="M23 19.500H41M23 28.500H41M23 37.500H41" />
      </Action>
    </div>
  );
}

function SystemNav() {
  return (
    <div className="flex h-[120px] items-center justify-center gap-[183px]">
      <svg className="h-[50px] w-[44px]" viewBox="0 0 44 50"><path d="M39.500 3.500V46.500L4 26Q2.500 25 4 24Z" fill="none" stroke="#d0d0d0" strokeWidth="4" strokeLinejoin="round" /></svg>
      <svg className="h-[50px] w-[50px]" viewBox="0 0 50 50"><circle cx="25" cy="25" r="21.500" fill="none" stroke="#d0d0d0" strokeWidth="4" /></svg>
      <svg className="h-[50px] w-[44px]" viewBox="0 0 44 50"><rect x="2.500" y="6" width="38" height="38" rx="1.500" fill="none" stroke="#d0d0d0" strokeWidth="4" /></svg>
    </div>
  );
}

export default function App() {
  return (
    <div className="h-[2400px] w-[1080px] overflow-hidden bg-white font-['Noto_Sans_CJK_SC','Noto_Sans',sans-serif]">
      <header className="h-[276px] bg-[#f13037]">
        <StatusBar />
        <TitleBar />
      </header>
      <Quote />
      <News />
      <div className="h-[12px] bg-[#f4f4f4]" />
      <PeriodTabs />
      <div className="h-[59px] pt-[2px] pl-[12px]">
        <button className="flex h-[55px] w-[315px] items-center rounded-[8px] bg-[#f4f4f4] pb-[3px] pl-[15px] text-[36px] leading-[50px] text-[#333]">
          强龙战法体验版
          <Down className="mt-[1px] ml-[15px] h-[12px] w-[18px]" />
        </button>
      </div>
      <main className="flex h-[1232px] gap-[12px] pl-[12px]">
        <div className="w-[684px]">
          <div className="relative">
            <KLineChart />
            <div className="absolute top-[510.500px] left-[3px] h-[72px] w-[72px] rounded-full bg-[#ebebeb]/80">
              <svg className="h-[72px] w-[72px]" viewBox="0 0 72 72"><path d="M17.500 20L35 37L17.500 54M35 20L52 37L35 54" fill="none" stroke="#666" strokeWidth="3" /></svg>
            </div>
            <div className="absolute top-[510.500px] left-[147px] h-[72px] w-[72px] rounded-full bg-[#e9e9e9]">
              <svg className="h-[72px] w-[72px]" viewBox="0 0 72 72"><path d="M20 34V21.500H35.500M37.500 53.500H53V38" fill="none" stroke="#777" strokeWidth="3.600" /></svg>
            </div>
          </div>
          <div className="relative h-[80px] bg-[#f5f5f5]">
            <TimeTicks />
            <div className="flex items-center pt-[8px] leading-[36px] whitespace-nowrap">
              <span className="ml-[12px] w-[184px] text-[34px] font-medium tracking-[0.4px] text-[#333]">2025-03-24</span>
              <span className="ml-[102px] text-[35px] tracking-[0.5px] text-[#999]">06-19</span>
              <span className="ml-auto h-[35px] w-[277px] bg-[#5396ec] text-center text-[30.500px] leading-[33px] text-white">2025/09/05 分时 &gt;</span>
            </div>
            <i className="absolute top-[62px] left-[629px] h-[12px] w-[12px] rounded-full bg-[#e80808]" />
          </div>
          <IndicatorHead name="主力进出APP" wide legendClass="pt-[5px] pl-[15px] text-[21px] leading-[24px] tracking-[-0.1px] whitespace-nowrap">
            <div className="flex gap-[7px]"><span className="text-black">(2)</span><span className="text-[#f5a623]">主力:79.91万</span><span className="text-[#18e018]">游资:92.14万</span><span className="text-[#d81818]">大</span></div>
            <div className="flex gap-[7px]"><span className="text-[#d81818]">户:80.51万</span><span className="text-[#28e8f0]">散户:72.92万</span><span className="text-[#cc22dd]">警戒:68.18万</span></div>
          </IndicatorHead>
          <MainForceChart />
          <div className="h-[6px]" />
          <IndicatorHead name="操盘决策" legendClass="pt-[5px] pl-[15px] text-[29.500px] leading-[35px] whitespace-nowrap">
            <div className="flex gap-[9px] tracking-[0.2px]"><span className="text-black">(3)</span><span className="text-[#45addb]">获利回吐:0.01</span><span className="text-[#eba325]">空头回补:0.00</span></div>
            <div className="flex gap-[9px] tracking-[0.7px]"><span className="text-[#559a9a]">坚决做空:-0.10</span><span className="text-[#e31be3]">买入持股:-0.00</span></div>
          </IndicatorHead>
          <DecisionChart />
          <div className="h-[6px]" />
          <IndicatorHead name="抄底先锋" legendClass="pt-[6px] pl-[15px] text-[27px] leading-[32px] whitespace-nowrap">
            <div className="flex gap-[8px]"><span className="text-black">(3)</span><span className="tracking-[-0.2px] text-[#d81818]">主力吸货:0.00</span><span className="tracking-[0.5px] text-[#45addb]">周线回吐:--</span><span className="text-[#eba325]">周线回</span></div>
            <div className="flex gap-[8px]"><span className="tracking-[1.500px] text-[#eba325]">补:--</span><span className="tracking-[0.600px] text-[#559a9a]">周线做空:--</span><span className="text-[#cc22dd]">周线持股:0.00</span></div>
          </IndicatorHead>
          <VanguardChart />
        </div>
        <div className="w-[360px]">
          <ChipChart />
          <ChipInfo />
        </div>
      </main>
      <div className="h-[12px]" />
      <Strategies />
      <BottomBar />
      <SystemNav />
    </div>
  );
}
